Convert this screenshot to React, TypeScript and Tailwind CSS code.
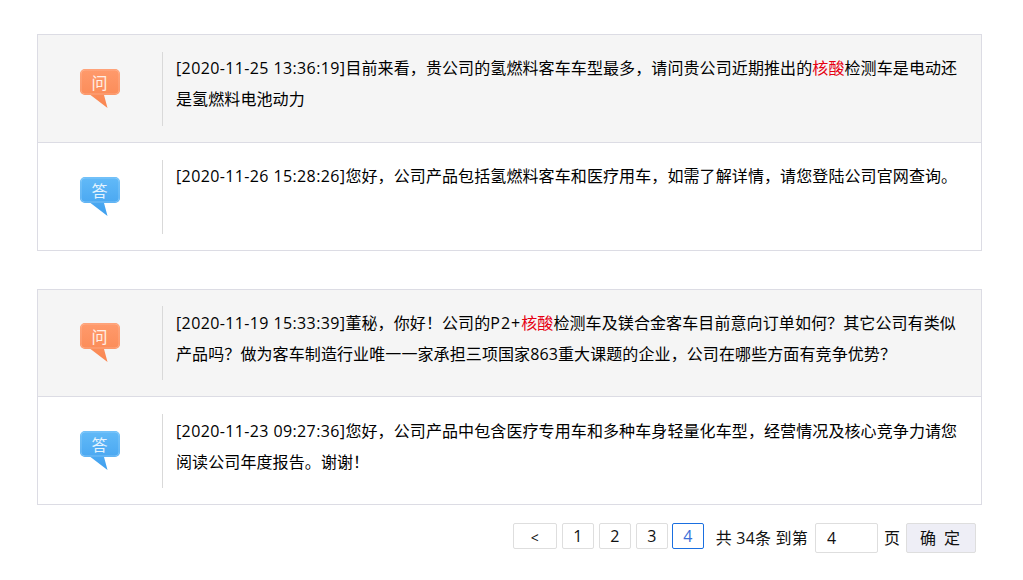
const font = { fontFamily: '"Open Sans", "Noto Sans CJK SC", sans-serif' };

function BubbleIcon({ id, top, bottom, edge, label }: { id: string; top: string; bottom: string; edge: string; label: string }) {
  return (
    <div className="relative w-[40px] h-[40px]">
      <svg width="40" height="40" viewBox="0 0 40 40" className="block">
        <defs>
          <linearGradient id={id} x1="0" y1="0" x2="0" y2="1">
            <stop offset="0" stopColor={top} />
            <stop offset="1" stopColor={bottom} />
          </linearGradient>
        </defs>
        <path
          d="M5 0h30a5 5 0 0 1 5 5v16a5 5 0 0 1-5 5h-11l3.500 13-17-13h-5.500a5 5 0 0 1-5-5v-16a5 5 0 0 1 5-5z"
          fill={`url(#${id})`}
        />
        <path d="M5 1h30a4 4 0 0 1 4 4v16a4 4 0 0 1-4 4h-30a4 4 0 0 1-4-4v-16a4 4 0 0 1 4-4z" fill="none" stroke={edge} strokeOpacity="0.5" />
      </svg>
      <span className="absolute left-0 top-[4px] w-full text-center text-[16px] leading-[20px] text-white/85">{label}</span>
    </div>
  );
}

function Row({ type, lower, children }: { type: "q" | "a"; lower?: boolean; children: React.ReactNode }) {
  const isQ = type === "q";
  return (
    <div className={`flex items-start pt-[16.6px] ${isQ ? "h-[107.6px] bg-[#f5f5f5] border-b border-[#dcdce4]" : "h-[106.6px] bg-white"}`}>
      <div className="w-[125px] h-[74px] border-r border-[#d9d9d9] flex items-center justify-center pr-[1px]">
        {isQ ? (
          <BubbleIcon id="bubble-q" top="#ff9a6c" bottom="#f98650" edge="#ffc2a4" label="问" />
        ) : (
          <BubbleIcon id="bubble-a" top="#62baf8" bottom="#3f9fee" edge="#a6dafc" label="答" />
        )}
      </div>
      <p className={`ml-[13px] w-[790px] text-[16px] leading-[31px] tracking-[0.1px] text-black ${lower ? "pt-[2px]" : "pt-[1px]"}`}>{children}</p>
    </div>
  );
}

const Time = ({ children }: { children: string }) => <span className="tracking-[0.38px]">{children}</span>;

const PageBtn = ({ label, active, wide }: { label: string; active?: boolean; wide?: boolean }) => (
  <button
    className={`h-[26px] rounded-[2px] leading-none border ${wide ? "w-[44px] text-[14px] pt-[3px]" : "w-[32px] text-[16px]"} ${
      active ? "-ml-[1px] border-[#1a6fe0] text-[#3a6fd8]" : "border-[#dedede] text-[#111]"
    }`}
  >
    {label}
  </button>
);

export default function App() {
  return (
    <div className="w-[1023px] h-[580px] overflow-hidden bg-white pt-[34.4px] pl-[37px]" style={font}>
      <div className="w-[945px] border border-[#dcdce4]">
        <Row type="q">
          <Time>[2020-11-25 13:36:19]</Time>目前来看，贵公司的氢燃料客车车型最多，请问贵公司近期推出的<span className="text-[#e60012]">核酸</span>检测车是电动还是氢燃料电池动力
        </Row>
        <Row type="a">
          <Time>[2020-11-26 15:28:26]</Time>您好，公司产品包括氢燃料客车和医疗用车，如需了解详情，请您登陆公司官网查询。
        </Row>
      </div>
      <div className="w-[945px] mt-[38px] border border-[#dcdce4]">
        <Row type="q" lower>
          <Time>[2020-11-19 15:33:39]</Time>董秘，你好！公司的<span className="tracking-[1px]">P2+</span><span className="text-[#e60012]">核酸</span>检测车及镁合金客车目前意向订单如何？其它公司有类似产品吗？做为客车制造行业唯一一家承担三项国家863重大课题的企业，公司在哪些方面有竞争优势？
        </Row>
        <Row type="a" lower>
          <Time>[2020-11-23 09:27:36]</Time>您好，公司产品中包含医疗专用车和多种车身轻量化车型，经营情况及核心竞争力请您阅读公司年度报告。谢谢！
        </Row>
      </div>
      <div className="w-[939px] mt-[18.2px] flex items-center justify-end text-[16px] text-[#111]">
        <div className="flex items-center gap-[5px] mb-[3px]">
          <PageBtn label="<" wide />
          <PageBtn label="1" />
          <PageBtn label="2" />
          <PageBtn label="3" />
          <PageBtn label="4" active />
        </div>
        <span className="ml-[12px] tracking-[0.2px]">共 34条 到第</span>
        <input
          readOnly
          value="4"
          className="ml-[7px] w-[63px] h-[30px] border border-[#dedede] rounded-[2px] pl-[11px] text-[16px] outline-none"
        />
        <span className="ml-[6px]">页</span>
        <button className="ml-[6px] w-[70px] h-[30px] bg-[#eeeef6] border border-[#dedede] rounded-[2px] text-[16px] tracking-[2px]">确 定</button>
      </div>
    </div>
  );
}
